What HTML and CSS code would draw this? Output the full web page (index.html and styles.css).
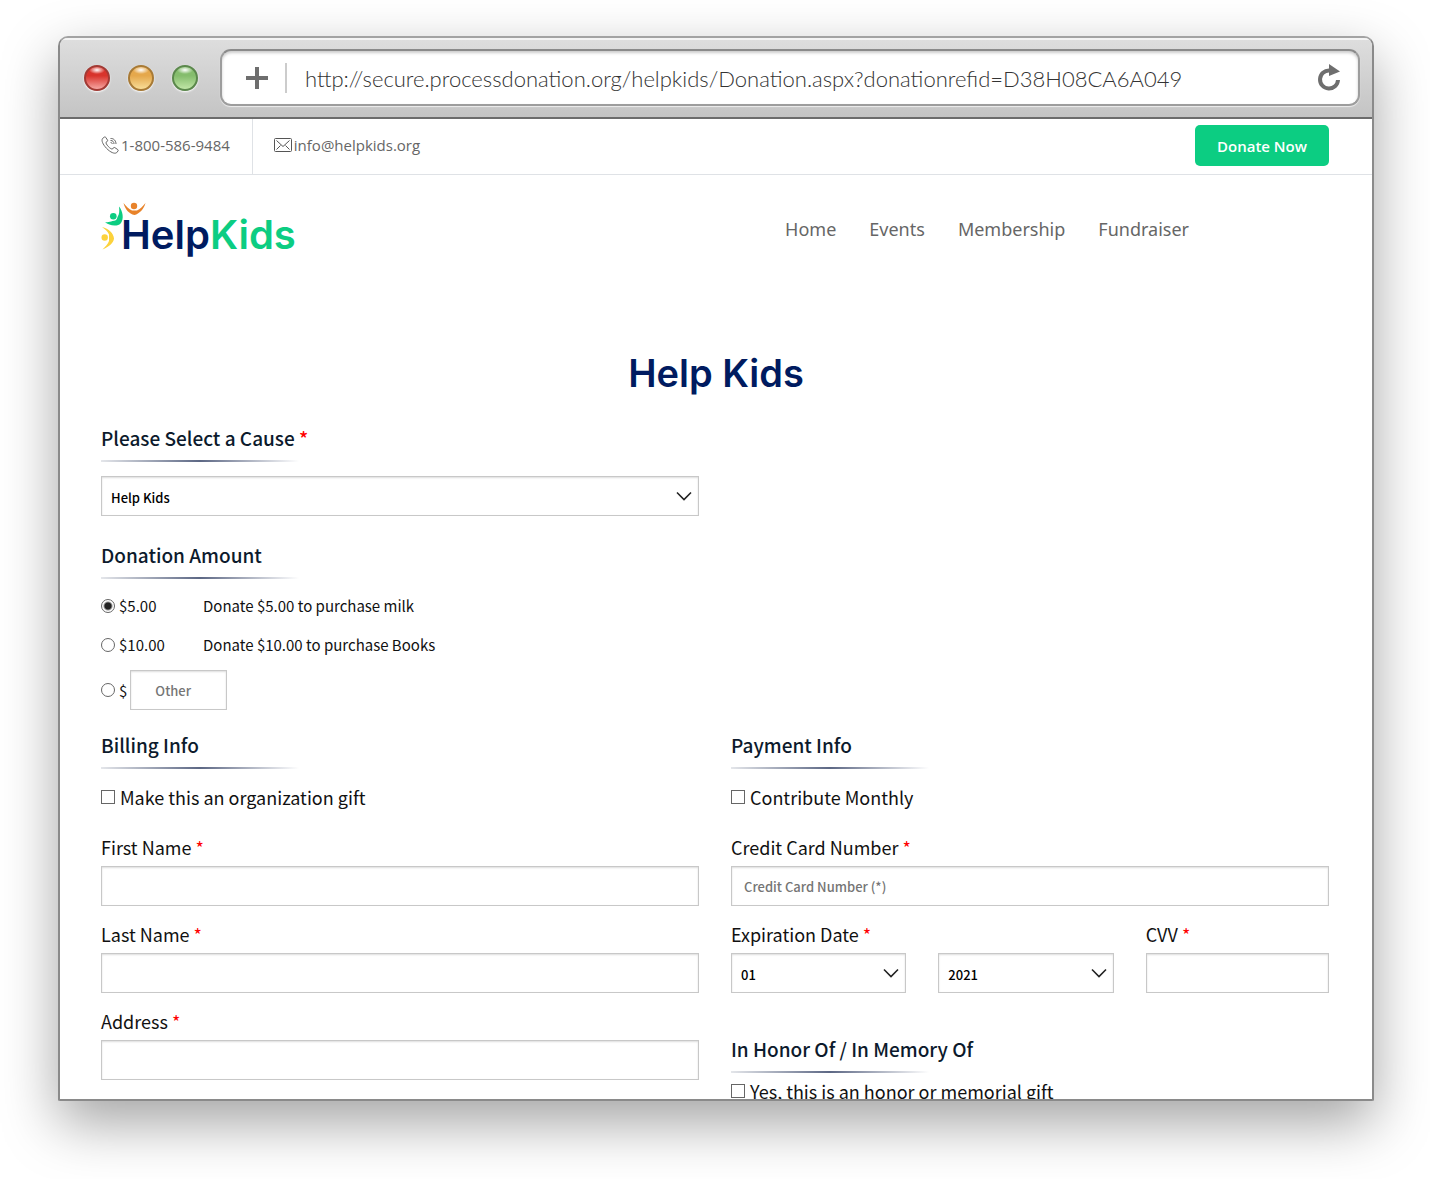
FILE: index.html
```html
<!DOCTYPE html>
<html lang="en">
<head>
<meta charset="utf-8">
<meta name="viewport" content="width=device-width, initial-scale=1">
<title>Help Kids - Donation</title>
<link rel="stylesheet" href="styles.css">
</head>
<body>
<div class="window">
  <div class="toolbar">
    <div class="lights">
      <span class="light light-red"></span>
      <span class="light light-amber"></span>
      <span class="light light-green"></span>
    </div>
    <div class="address">
      <button class="icon-button" type="button" aria-label="New tab">
        <svg width="24" height="24" viewBox="0 0 24 24"><path d="M12 1v22M1 12h22" stroke="#6e6e6e" stroke-width="4" fill="none"/></svg>
      </button>
      <input class="url" type="text" aria-label="Address" value="http://secure.processdonation.org/helpkids/Donation.aspx?donationrefid=D38H08CA6A049">
      <button class="icon-button" type="button" aria-label="Reload">
        <svg width="24" height="28" viewBox="0 0 24 28"><path d="M12.500 6.500A9 9 0 1 0 21 16" stroke="#6e6e6e" stroke-width="4" fill="none"/><path d="M12 0L23 7.500L12 12z" fill="#6e6e6e"/></svg>
      </button>
    </div>
  </div>

  <div class="page">
    <div class="topbar">
      <a class="contact contact-phone" href="tel:18005869484">
        <svg width="18" height="18" viewBox="0 0 18 18" fill="none" stroke="#666" stroke-width="1"><path d="M3.500 1L1.500 2.500C.3 4.500 1.500 8 5.500 12.300C9.500 16.500 13.500 18 15.500 16.800L17 15C17.400 14.400 17.300 14 16.800 13.600L13.800 11.600C13.300 11.200 12.800 11.300 12.400 11.800L11.500 13C11 13.500 8.800 12.200 7.300 10.500C5.700 8.800 4.600 6.800 5 6.300L6.300 5.400C6.700 5 6.800 4.600 6.500 4.100L4.700 1.300C4.400.8 3.900.7 3.500 1z"/><path d="M9.500 2.500C13 2.200 15 5 15 8M9.500 4.500C11.800 4.300 13 6 13 8M9.600 6.500C10.700 6.500 11.200 7 11.200 8"/></svg>
        <span>1-800-586-9484</span>
      </a>
      <a class="contact" href="mailto:info@helpkids.org">
        <svg width="18" height="14" viewBox="0 0 18 14" fill="none" stroke="#555" stroke-width="1"><rect x=".5" y=".5" width="17" height="13" rx="1"/><path d="M2.500 2.500L9 8.500L15.500 2.500M2.500 11.500L6.500 7.500M15.500 11.500L11.500 7.500"/></svg>
        <span>info@helpkids.org</span>
      </a>
      <button class="donate" type="button">Donate Now</button>
    </div>

    <header class="header">
      <a class="logo" href="#" aria-label="HelpKids">
        <svg class="logo-mark" width="50" height="50" viewBox="0 0 50 50">
          <g fill="#e8832a"><circle cx="33" cy="5" r="3.200"/><path d="M22.500 2C25 5 28 8.500 31 9.500H36C39 8.500 42 5 44.500 2C43 8 38 13 33.500 14C28 13 24 8 22.500 2z"/></g>
          <g fill="#0ccd82"><circle cx="12.300" cy="15.200" r="3.300"/><path d="M18 5.500C18.500 10 18.500 13 16.500 16C16 19 14 20 11.500 20C9 21 7 21.500 4 21C8 25 17 26 20 22C23 18 22 10 18 5.500z"/></g>
          <g fill="#fcd23c"><circle cx="3.700" cy="36.500" r="3.200"/><path d="M1 26C4 28 7 31 8 33.500V40C7 43 4 46 1.500 48.500C8 46 12.500 42 13 37.500C12.500 32 8 28 1 26z"/></g>
        </svg>
        <span class="logo-text">Help<span class="logo-accent">Kids</span></span>
      </a>
      <nav class="nav">
        <a href="#">Home</a>
        <a href="#">Events</a>
        <a href="#">Membership</a>
        <a href="#">Fundraiser</a>
      </nav>
    </header>

    <h1 class="title">Help Kids</h1>

    <form class="form">
      <section class="column cause">
        <h2 class="section-title"><label for="cause">Please Select a Cause <span class="required">*</span></label></h2>
        <select class="control" id="cause"><option>Help Kids</option></select>

        <h2 class="section-title amount-title">Donation Amount</h2>
        <label class="amount"><input class="radio" type="radio" name="amount" checked><span class="price">$5.00</span><span>Donate $5.00 to purchase milk</span></label>
        <label class="amount"><input class="radio" type="radio" name="amount"><span class="price">$10.00</span><span>Donate $10.00 to purchase Books</span></label>
        <div class="amount amount-other">
          <label class="other-choice"><input class="radio" type="radio" name="amount"><span>$</span></label>
          <input class="control other" type="text" placeholder="Other" aria-label="Other amount">
        </div>
      </section>

      <section class="column">
        <h2 class="section-title">Billing Info</h2>
        <label class="check"><input class="checkbox" type="checkbox">Make this an organization gift</label>
        <div class="field">
          <label for="first">First Name <span class="required">*</span></label>
          <input class="control" id="first" type="text">
        </div>
        <div class="field">
          <label for="last">Last Name <span class="required">*</span></label>
          <input class="control" id="last" type="text">
        </div>
        <div class="field">
          <label for="street">Address <span class="required">*</span></label>
          <input class="control" id="street" type="text">
        </div>
        <div class="field">
          <label for="country"><span class="required">*</span> Country</label>
          <input class="control" id="country" type="text">
        </div>
      </section>

      <section class="column">
        <h2 class="section-title">Payment Info</h2>
        <label class="check"><input class="checkbox" type="checkbox">Contribute Monthly</label>
        <div class="field">
          <label for="card">Credit Card Number <span class="required">*</span></label>
          <input class="control" id="card" type="text" placeholder="Credit Card Number (*)">
        </div>
        <div class="card-row">
          <div class="field">
            <label for="month">Expiration Date <span class="required">*</span></label>
            <select class="control" id="month"><option>01</option></select>
          </div>
          <div class="field">
            <select class="control" id="year" aria-label="Expiration year"><option>2021</option></select>
          </div>
          <div class="field">
            <label for="cvv">CVV <span class="required">*</span></label>
            <input class="control" id="cvv" type="text">
          </div>
        </div>
        <h2 class="section-title honor-title">In Honor Of / In Memory Of</h2>
        <label class="check honor-check"><input class="checkbox" type="checkbox">Yes, this is an honor or memorial gift</label>
      </section>
    </form>
  </div>
</div>
</body>
</html>
```
FILE: styles.css
```css
* {
  box-sizing: border-box;
}

body {
  display: flex;
  height: 100vh;
  margin: 0;
  padding: 36px 56px 78px 58px;
  background: #fff;
  color: #111;
  font-family: "Noto Sans CJK SC", "Open Sans", sans-serif;
}

.window {
  display: flex;
  flex: 1;
  flex-direction: column;
  min-width: 0;
  overflow: hidden;
  border: 2px solid #8a8a8a;
  border-top-color: #a3a3a3;
  border-radius: 10px 10px 2px 2px;
  background: #fff;
  box-shadow: 0 22px 56px rgba(0, 0, 0, 0.36);
}

/* Browser toolbar */
.toolbar {
  display: flex;
  flex: none;
  align-items: center;
  gap: 22px;
  padding: 11px 12px 11px 24px;
  border-bottom: 2px solid #6c6c6c;
  background: linear-gradient(#dedede, #c4c4c4);
  box-shadow: inset 0 2px #f4f4f4;
}

.lights {
  display: flex;
  gap: 18px;
}

.light {
  width: 26px;
  height: 26px;
  border: 2px solid;
  border-radius: 50%;
  box-shadow: 0 1px 2px #fff;
}

.light-red {
  border-color: #a23a34;
  background: radial-gradient(8px 4px at 50% 3px, #fff, transparent), linear-gradient(#d8342c 40%, #f6a6a2);
}

.light-amber {
  border-color: #a87a35;
  background: radial-gradient(8px 4px at 50% 3px, #fff, transparent), linear-gradient(#e5a84c 40%, #f8dd98);
}

.light-green {
  border-color: #5b884c;
  background: radial-gradient(8px 4px at 50% 3px, #fff, transparent), linear-gradient(#85bd6d 40%, #c0e6a6);
}

.address {
  display: flex;
  flex: 1;
  align-items: center;
  height: 57px;
  padding: 0 17px 0 23px;
  border: 2px solid #9d9d9d;
  border-top-color: #8a8a8a;
  border-radius: 11px;
  background: #fff;
  box-shadow: inset 0 2px 3px #ccc, 0 1px 1px #eee;
}

.icon-button {
  display: flex;
  padding: 0;
  border: 0;
  background: none;
}

.url {
  flex: 1;
  min-width: 0;
  height: 30px;
  margin-left: 16px;
  padding: 2px 0 0 18px;
  border: 0;
  border-left: 2px solid #ccc;
  background: none;
  color: #333;
  font: 300 22px Lato, sans-serif;
}

/* Site header */
.page {
  flex: 1;
  min-height: 0;
  overflow: hidden;
}

.topbar {
  display: flex;
  height: 56px;
  padding: 0 43px 0 41px;
  border-bottom: 1px solid #dfe2e6;
  font-family: "Open Sans", sans-serif;
}

.contact {
  display: flex;
  align-items: center;
  gap: 2px;
  padding-bottom: 4px;
  color: #666;
  font-size: 15px;
  text-decoration: none;
}

.contact-phone {
  margin-right: 21px;
  padding-right: 22px;
  border-right: 1px solid #dfe2e6;
}

.donate {
  height: 41px;
  margin: 6px 0 0 auto;
  padding: 0 22px;
  border: 0;
  border-radius: 5px;
  background: #0ccd82;
  color: #fff;
  font: 600 15px "Open Sans", sans-serif;
}

.header {
  display: flex;
  align-items: flex-start;
  justify-content: space-between;
  height: 110px;
  padding: 26px 183px 0 41px;
}

.logo {
  display: flex;
  color: #001b60;
  font: 600 40px/44px Inter, sans-serif;
  text-decoration: none;
}

.logo-mark {
  margin-right: -30px;
}

.logo-text {
  padding-top: 12px;
}

.logo-accent {
  color: #0ccd82;
}

.nav {
  display: flex;
  gap: 33px;
  padding-top: 14px;
  font: 18px/28px "Noto Sans", "Open Sans", sans-serif;
}

.nav a {
  color: #666;
  text-decoration: none;
}

.title {
  margin: 64px 0 26px;
  color: #001b60;
  font: 600 38px/48px Inter, sans-serif;
  text-align: center;
}

/* Donation form */
.form {
  display: grid;
  grid-template-columns: 1fr 1fr;
  column-gap: 32px;
  padding: 0 43px 0 41px;
}

.cause {
  grid-column: 1 / -1;
  width: calc(50% - 16px);
}

.section-title {
  margin: 0 0 14px;
  padding-bottom: 9px;
  background: linear-gradient(90deg, #e4e6ea, #5c6784, #fff) left bottom / 198px 2px no-repeat;
  color: #0c1a2c;
  font-size: 19px;
  font-weight: 500;
  line-height: 30px;
}

.required {
  color: #f00;
}

.control {
  display: block;
  width: 100%;
  height: 40px;
  padding: 0 12px;
  border: 1px solid #c8c8c8;
  border-radius: 0;
  background: #fff;
  box-shadow: inset 0 1px 2px #ddd;
  color: #000;
  font: 500 13px "Noto Sans CJK SC", sans-serif;
}

.control::placeholder {
  color: #757575;
  opacity: 1;
}

select.control {
  padding: 2px 9px 0;
  appearance: none;
  background: #fff url("data:image/svg+xml,%3Csvg xmlns='http://www.w3.org/2000/svg' width='16' height='10'%3E%3Cpath d='M1 1.500l7 7 7-7' fill='none' stroke='%23222' stroke-width='1.600'/%3E%3C/svg%3E") right 6px center no-repeat;
}

.amount-title {
  margin-top: 24px;
  margin-bottom: 7px;
}

.amount {
  display: flex;
  align-items: center;
  height: 39px;
  font-size: 15px;
}

.radio,
.checkbox {
  flex: none;
  width: 14px;
  height: 14px;
  margin: 0;
  appearance: none;
  border: 1px solid #666;
  background: #fff;
}

.radio {
  margin-right: 4px;
  border-radius: 50%;
}

.radio:checked {
  background: radial-gradient(#222 0 3px, #fff 5px);
}

.price {
  width: 84px;
}

.other-choice {
  display: flex;
  align-items: center;
}

.other {
  width: 97px;
  margin-left: 3px;
  padding: 0 24px;
}

.amount-other {
  height: 52px;
  margin-bottom: 14px;
}

.check {
  display: flex;
  align-items: center;
  gap: 5px;
  height: 28px;
  margin-bottom: 21px;
  font-size: 18px;
  line-height: 26px;
}

.field {
  display: flex;
  flex-direction: column;
  gap: 4px;
  margin-bottom: 13px;
  font-size: 18px;
  line-height: 30px;
}

.card-row {
  display: grid;
  grid-template-columns: 175fr 175fr 183fr;
  align-items: end;
  gap: 32px;
}

.honor-title {
  margin-top: 28px;
  margin-bottom: 4px;
}
```
